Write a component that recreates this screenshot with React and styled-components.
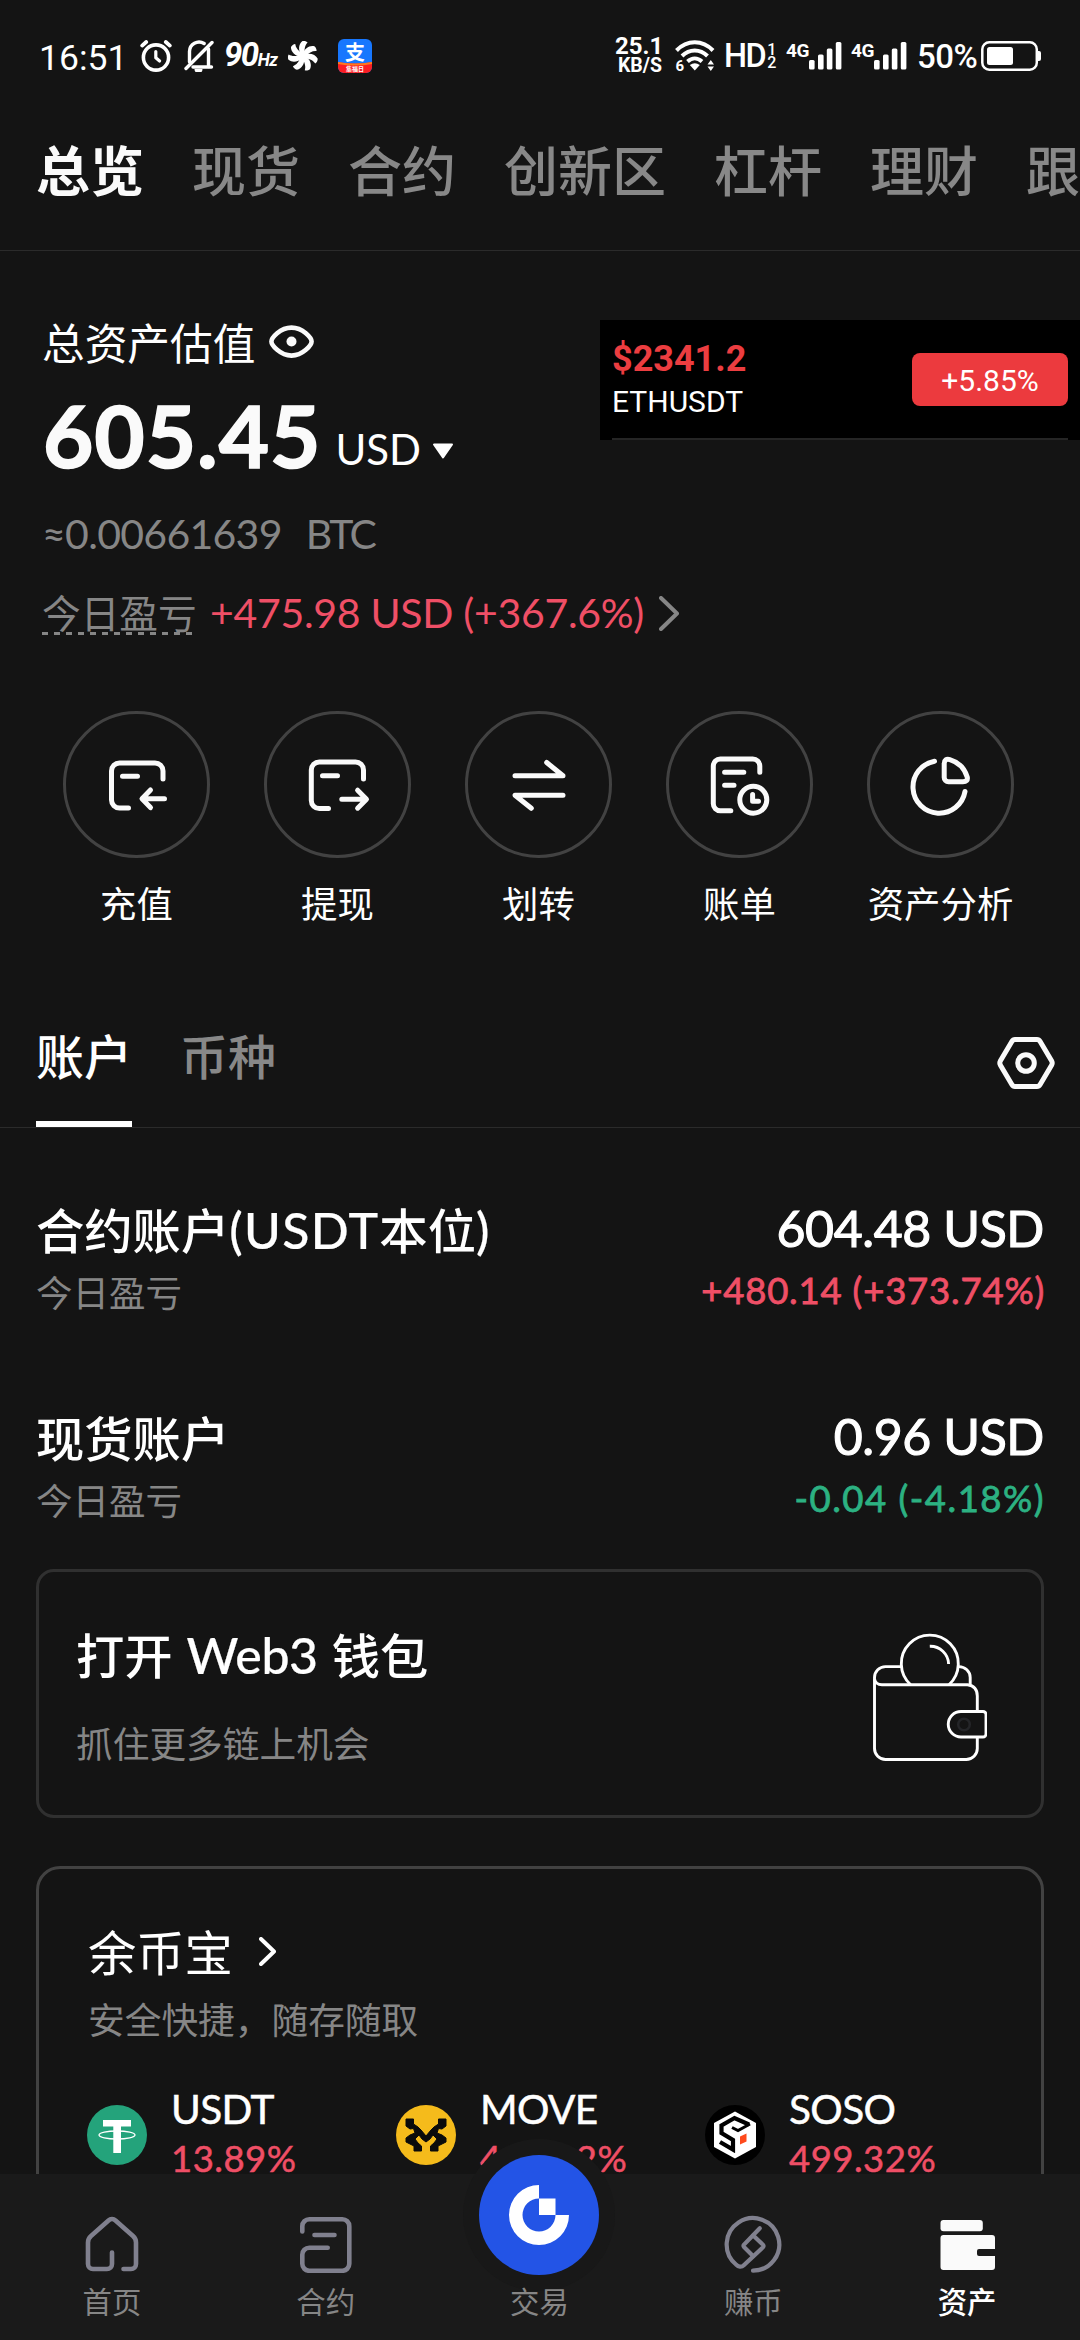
import React from 'react';
import styled, { createGlobalStyle } from 'styled-components';

const cjk = '"Noto Sans CJK SC", sans-serif';
const latin = 'Lato, "Noto Sans CJK SC", sans-serif';
const roboto = 'Roboto, "Noto Sans CJK SC", sans-serif';

const colors = {
  bg: '#141414',
  navBg: '#1a1a1a',
  grey: '#868686',
  red: '#ef4f66',
  green: '#2cb182',
  line: '#2b2b2b',
  ring: '#424242',
};

const GlobalStyle = createGlobalStyle`
  * {
    box-sizing: border-box;
  }
  body {
    margin: 0;
    background: ${colors.bg};
  }
  svg {
    display: block;
    flex: none;
  }
`;

const Page = styled.div`
  width: 1080px;
  height: 2340px;
  display: flex;
  flex-direction: column;
  position: relative;
  overflow: hidden;
  background: ${colors.bg};
  color: #fff;
  font-family: ${cjk};
  white-space: nowrap;
`;

const Content = styled.main`
  flex: 1;
  min-height: 0;
  overflow: hidden;
`;

/* status bar */

const StatusBar = styled.header`
  height: 112px;
  padding: 0 38px 0 39px;
  display: flex;
  justify-content: space-between;
  align-items: center;
  font-family: ${roboto};
`;

const StatusGroup = styled.div`
  display: flex;
  align-items: center;
`;

const StatusItem = styled.div`
  width: ${({ $width }) => $width}px;
  margin-left: ${({ $gap }) => $gap || 0}px;
  flex: none;
`;

const Time = styled(StatusItem)`
  font-size: 35.5px;
  line-height: 40px;
  padding-top: 3px;
`;

const Refresh = styled(StatusItem)`
  display: flex;
  align-items: baseline;
  padding-top: 2px;
  font-size: 33px;
  line-height: 40px;
  font-weight: 700;
  font-style: italic;
  letter-spacing: -1.5px;
  small {
    font-size: 17.5px;
    letter-spacing: -0.5px;
  }
`;

const Speed = styled(StatusItem)`
  padding-right: 1px;
  text-align: right;
  font-size: 24px;
  line-height: 20px;
  font-weight: 700;
  small {
    display: block;
    font-size: 19.5px;
  }
`;

const Hd = styled(StatusItem)`
  display: flex;
  align-items: center;
  font-size: 32.5px;
  line-height: 40px;
  font-weight: 500;
  letter-spacing: -1.5px;
`;

const HdIndex = styled.span`
  display: flex;
  flex-direction: column;
  margin-left: 2px;
  font-size: 16px;
  line-height: 13px;
`;

const Signal = styled(StatusItem)`
  display: flex;
  align-items: flex-start;
  font-size: 19px;
  line-height: 17px;
  font-weight: 700;
  letter-spacing: -0.5px;
`;

const Percent = styled(StatusItem)`
  padding-top: 1px;
  font-size: 33px;
  line-height: 40px;
  font-weight: 500;
  letter-spacing: -0.5px;
`;

/* top tabs */

const TopTabs = styled.nav`
  height: 139px;
  padding: 30px 0 0 36px;
  display: flex;
  gap: 48px;
  border-bottom: 1px solid ${colors.line};
  overflow: hidden;
`;

const TopTab = styled.span`
  flex: none;
  font-size: 54px;
  line-height: 54px;
  font-weight: ${({ $active }) => ($active ? 700 : 500)};
  color: ${({ $active }) => ($active ? '#fafafa' : '#888')};
`;

/* overview */

const Overview = styled.section`
  padding: 60px 0 0 42px;
`;

const TitleRow = styled.div`
  height: 60px;
  display: flex;
  align-items: center;
  gap: 14px;
  font-size: 42.7px;
  line-height: 60px;
  svg {
    margin-top: 2px;
  }
`;

const BalanceRow = styled.div`
  margin-top: 19px;
  height: 90px;
  display: flex;
  align-items: flex-end;
  font-family: ${latin};
`;

const Balance = styled.strong`
  padding-left: 1px;
  font-size: 87px;
  line-height: 90px;
  font-weight: 700;
  letter-spacing: 0.9px;
  color: #fafafa;
  -webkit-text-stroke: 1.6px #fafafa;
`;

const Currency = styled.span`
  margin: 0 11px 1px 14px;
  font-size: 42px;
  line-height: 60px;
`;

const Caret = styled.svg`
  margin-bottom: 21px;
`;

const BtcValue = styled.div`
  margin-top: 28px;
  display: flex;
  gap: 24px;
  font-family: ${latin};
  font-size: 41px;
  line-height: 51px;
  letter-spacing: -0.7px;
  color: ${colors.grey};
  span + span {
    letter-spacing: -2.5px;
  }
`;

const PnlRow = styled.div`
  margin-top: 29px;
  height: 50px;
  display: flex;
  align-items: center;
`;

const PnlLabel = styled.span`
  width: 152px;
  padding-bottom: 3px;
  font-size: 38.7px;
  line-height: 41px;
  color: ${colors.grey};
  background: repeating-linear-gradient(90deg, #868686 0 6px, transparent 6px 12px) left bottom / 100% 3px no-repeat;
`;

const PnlValue = styled.span`
  margin: 0 15px 0 16px;
  font-family: ${latin};
  font-size: 41px;
  line-height: 50px;
  letter-spacing: -0.3px;
  color: ${colors.red};
`;

/* floating price ticker */

const Ticker = styled.aside`
  position: absolute;
  top: 320px;
  left: 600px;
  width: 480px;
  height: 120px;
  padding: 0 12px;
  background: #000;
  font-family: ${roboto};
`;

const TickerInner = styled.div`
  height: 120px;
  display: flex;
  justify-content: space-between;
  align-items: flex-start;
  border-bottom: 2px solid #252525;
`;

const TickerPrice = styled.div`
  margin-top: 18px;
  font-size: 36px;
  line-height: 42px;
  font-weight: 700;
  color: #ec3d40;
`;

const TickerSymbol = styled.div`
  margin-top: 2px;
  font-size: 30px;
  line-height: 40px;
`;

const TickerChange = styled.div`
  width: 156px;
  height: 53px;
  margin-top: 33px;
  border-radius: 8px;
  background: #ec3a3e;
  font-size: 30px;
  line-height: 55px;
  text-align: center;
`;

/* quick actions */

const Actions = styled.section`
  margin-top: 73px;
  padding: 0 39px 0 36px;
  display: grid;
  grid-template-columns: repeat(5, 1fr);
`;

const Action = styled.div`
  display: flex;
  flex-direction: column;
  align-items: center;
`;

const ActionCircle = styled.div`
  width: 147px;
  height: 147px;
  border: 3px solid ${colors.ring};
  border-radius: 50%;
  display: flex;
  align-items: center;
  justify-content: center;
`;

const ActionLabel = styled.span`
  margin-top: 19px;
  font-size: 36.4px;
  line-height: 50px;
`;

/* account list */

const SectionTabs = styled.div`
  height: 201px;
  padding: 0 25px 0 36px;
  display: flex;
  align-items: flex-end;
  border-bottom: 1px solid ${colors.line};
  svg {
    margin: 0 0 38px auto;
  }
`;

const SectionTab = styled.span`
  height: 103px;
  margin-right: 48px;
  font-size: 48px;
  line-height: 60px;
  font-weight: 500;
  color: ${({ $active }) => ($active ? '#fff' : '#888')};
  border-bottom: 6px solid ${({ $active }) => ($active ? '#fff' : 'transparent')};
`;

const Accounts = styled.section`
  padding: 70px 36px 0;
  display: flex;
  flex-direction: column;
  gap: 89px;
`;

const Account = styled.div`
  height: 119px;
  display: flex;
  justify-content: space-between;
`;

const AccountName = styled.div`
  font-size: 48.3px;
  line-height: 60px;
  font-weight: 500;
  span {
    font-family: ${latin};
    font-size: 50px;
    line-height: 1;
    letter-spacing: 1.3px;
    -webkit-text-stroke: 0.2px #fff;
  }
`;

const AccountNote = styled.div`
  margin-top: 9px;
  font-size: 36.5px;
  line-height: 50px;
  color: ${colors.grey};
`;

const Amount = styled.div`
  font-family: ${latin};
  font-size: 50px;
  line-height: 60px;
  text-align: right;
  letter-spacing: -0.4px;
  -webkit-text-stroke: 1.1px #fff;
`;

const Change = styled.div`
  margin: 7px -1px 0 0;
  font-family: ${latin};
  font-size: 36.5px;
  line-height: 50px;
  text-align: right;
  letter-spacing: ${({ $up }) => ($up ? 0.8 : 1.5)}px;
  color: ${({ $up }) => ($up ? colors.red : colors.green)};
  -webkit-text-stroke: 0.8px currentColor;
`;

/* cards */

const WalletCard = styled.section`
  height: 249px;
  margin: 44px 36px 0;
  padding: 51px 54px 0 37px;
  display: flex;
  justify-content: space-between;
  border: 3px solid #303030;
  border-radius: 18px;
  svg {
    margin-top: 10px;
  }
`;

const CardTitle = styled.div`
  height: 60px;
  display: flex;
  align-items: center;
  font-size: 48.3px;
  line-height: 60px;
  font-weight: ${({ $weight }) => $weight || 400};
  svg {
    margin: 2px 0 0 26px;
  }
`;

const CardTitleLatin = styled.span`
  padding-top: 3px;
  margin: 0 14px 0 14px;
  font-family: ${latin};
  font-size: 50px;
  letter-spacing: -0.4px;
  -webkit-text-stroke: 0.2px #fff;
`;

const CardNote = styled.div`
  margin-top: ${({ $gap }) => $gap}px;
  font-size: 36.7px;
  line-height: 50px;
  color: ${colors.grey};
`;

const EarnCard = styled.section`
  height: 420px;
  margin: 48px 36px 0;
  padding: 51px 27px 0 49px;
  border: 3px solid ${colors.ring};
  border-radius: 24px;
`;

const Coins = styled.div`
  margin: 40px 0 0 -1px;
  display: grid;
  grid-template-columns: repeat(3, 309px);
`;

const Coin = styled.div`
  display: flex;
  gap: 24px;
  svg {
    margin-top: 22px;
  }
`;

const CoinName = styled.div`
  font-family: ${latin};
  font-size: 40.5px;
  line-height: 50px;
  padding-top: 1px;
  letter-spacing: -0.6px;
  -webkit-text-stroke: 0.5px #fff;
`;

const CoinRate = styled.div`
  margin-top: -1px;
  font-family: ${latin};
  font-size: 36.5px;
  line-height: 50px;
  letter-spacing: 0.5px;
  color: ${colors.red};
  -webkit-text-stroke: 0.5px currentColor;
`;

/* bottom navigation */

const BottomNav = styled.nav`
  flex: none;
  height: 166px;
  padding: 41px 6px 0 5px;
  display: grid;
  grid-template-columns: repeat(5, 1fr);
  background: ${colors.navBg};
  position: relative;
`;

const NavItem = styled.div`
  display: flex;
  flex-direction: column;
  align-items: center;
  color: ${({ $active }) => ($active ? '#fff' : colors.grey)};
`;

const NavLabel = styled.span`
  margin-top: 7px;
  font-size: 29.4px;
  line-height: 40px;
  font-weight: ${({ $active }) => ($active ? 500 : 400)};
`;

const TradeButton = styled.div`
  width: 120px;
  height: 120px;
  margin: -60px 0 -2px;
  border-radius: 50%;
  background: #2354e6;
  box-shadow: 0 0 0 16px #181818;
`;

/* icons */

const line = (color, width) => ({
  fill: 'none',
  stroke: color,
  strokeWidth: width,
  strokeLinecap: 'round',
  strokeLinejoin: 'round',
});

const AlarmIcon = () => (
  <svg width="32" height="32" viewBox="0 0 32 32" {...line('#fff', 3.6)}>
    <circle cx="16" cy="17.5" r="12.6" />
    <path d="M15.8 11.5v6.2l3.8 3.3" strokeWidth="3.2" />
    <path d="M2.2 5.6l4-3.6M29.8 5.6l-4-3.6" strokeWidth="3.8" />
  </svg>
);

const MuteIcon = () => (
  <svg width="30" height="32" viewBox="0 0 30 32" {...line('#fff', 3.4)}>
    <path d="M5.5 22V11.5a9.5 9.5 0 0 1 14.6-8M24.5 9v17.5" />
    <path d="M9 27h18.5" />
    <path d="M2 28.5L28 2.5" />
    <path d="M10.5 29h8a4 4 0 0 1-8 0z" fill="#fff" stroke="none" />
  </svg>
);

const FanIcon = () => (
  <svg width="30" height="32" viewBox="-15 -16 30 32" fill="#fff">
    <circle r="3.6" />
    {[0, 51.4, 102.8, 154.3, 205.7, 257.1, 308.5].map((a) => (
      <path key={a} transform={`rotate(${a})`} d="M-1.8 -1C-5 -6 -4.5 -12 -0.5 -15C1.5 -15.4 3.8 -14.8 4.6 -13.6C2 -11 1 -7 1.8 -1Z" />
    ))}
  </svg>
);

const PayIcon = () => (
  <svg width="34" height="34" viewBox="0 0 34 34">
    <defs>
      <clipPath id="pay">
        <rect width="34" height="34" rx="6" />
      </clipPath>
    </defs>
    <g clipPath="url(#pay)">
      <rect width="34" height="34" fill="#1777fe" />
      <path d="M0 23Q17 26 34 23V34H0Z" fill="#fb1d22" />
      <path d="M0 23Q17 26 34 23V25Q17 28 0 25Z" fill="#ff7a1c" />
    </g>
    <text x="17" y="20.5" fontSize="20" fontWeight="700" textAnchor="middle" fill="#fff" fontFamily="Noto Sans CJK SC, sans-serif">支</text>
    <text x="17" y="32" fontSize="6" fontWeight="700" textAnchor="middle" fill="#fff" fontFamily="Noto Sans CJK SC, sans-serif">集福日</text>
  </svg>
);

const WifiIcon = () => (
  <svg width="40" height="32" viewBox="0 0 40 32" {...line('#fff', 4)} strokeLinecap="butt">
    <path d="M1.5 10.5C12 -.5 27.5 -.5 38 10.5" />
    <path d="M7 16C14.5 8.5 25 8.5 32.5 16" />
    <path d="M12.5 21.5C17 17.5 22.5 17.5 27 21.5" />
    <path d="M14.8 25Q19.8 21.5 24.8 25L19.8 30.5Z" fill="#fff" stroke="none" />
    <path d="M32.5 24.5L35.8 20L39 24.5ZM32.5 26.5L35.8 31L39 26.5Z" fill="#fff" stroke="none" />
    <text x="0.5" y="31" fontSize="15" fontWeight="700" fill="#fff" stroke="none" fontFamily="Roboto, sans-serif">6</text>
  </svg>
);

const SignalIcon = () => (
  <svg width="33" height="28" viewBox="0 0 33 28" fill="#fff">
    <rect x="0" y="18" width="5.6" height="9.5" rx="1.5" />
    <rect x="9" y="12.5" width="5.6" height="15" rx="1.5" />
    <rect x="17.8" y="6.5" width="5.6" height="21" rx="1.5" />
    <rect x="26.8" y="0" width="5.6" height="27.5" rx="1.5" />
  </svg>
);

const BatteryIcon = () => (
  <svg width="61" height="30" viewBox="0 0 61 30">
    <rect x="1.3" y="1.3" width="54.5" height="27.4" rx="7" fill="none" stroke="#fff" strokeWidth="2.5" />
    <rect x="6" y="6" width="26" height="18" rx="2.5" fill="#fff" />
    <path d="M56 10h2a2 2 0 0 1 2 2v6a2 2 0 0 1-2 2h-2z" fill="#fff" />
  </svg>
);

const EyeIcon = () => (
  <svg width="45" height="34" viewBox="0 0 45 34" {...line('#fafafa', 4.6)}>
    <path d="M2.4 16.5C2.4 13 11 2.6 22.5 2.6S42.6 13 42.6 16.5S34 30.6 22.5 30.6S2.4 20 2.4 16.5Z" />
    <circle cx="22.5" cy="16.5" r="5" fill="#fafafa" stroke="none" />
  </svg>
);

const DepositIcon = () => (
  <svg width="72" height="72" viewBox="0 0 72 72" {...line('#fafafa', 5)}>
    <path d="M27.5 59H18.5a8 8 0 0 1-8-8V22a8 8 0 0 1 8-8H54a8 8 0 0 1 8 8V30" />
    <path d="M21.5 27.2H36.5M63.5 49.8H41.5M49.5 41L41 49.8l8.5 8.8" />
  </svg>
);

const WithdrawIcon = () => (
  <svg width="72" height="72" viewBox="0 0 72 72" {...line('#fafafa', 5)}>
    <path d="M26.5 59.5H17.3a8 8 0 0 1-8-8V21a8 8 0 0 1 8-8H53.5a8 8 0 0 1 8 8V30" />
    <path d="M20.5 26.8H35.5M39.8 50.2H64M55.6 41.2L64.5 50.2l-8.9 9" />
  </svg>
);

const TransferIcon = () => (
  <svg width="72" height="72" viewBox="0 0 72 72" {...line('#fafafa', 5)}>
    <path d="M12 26.8H60L43.7 13.5M60 46.2H12L28.3 59.3" />
  </svg>
);

const BillIcon = () => (
  <svg width="72" height="72" viewBox="0 0 72 72" {...line('#fafafa', 5)}>
    <path d="M26.8 61.8H16.3a7 7 0 0 1-7-7V17a7 7 0 0 1 7-7H48.8a7 7 0 0 1 7 7V23.2" />
    <path d="M20.6 23.2H39.8M20.6 36.2H30" />
    <circle cx="49.3" cy="50.7" r="13.5" />
    <path d="M48.6 45.5V52.3H54.5" />
  </svg>
);

const PieIcon = () => (
  <svg width="72" height="72" viewBox="0 0 72 72" {...line('#fafafa', 5)}>
    <path d="M29.5 12.2A26.2 26.2 0 1 0 60 42.5" />
    <path d="M39.2 14.8C39.2 11 41.5 9.6 44.8 10.6A26 26 0 0 1 62.2 28C63 31 61.2 32.8 58 32.8H43.5a4.3 4.3 0 0 1-4.3-4.3Z" />
  </svg>
);

const HexIcon = () => (
  <svg width="58" height="52" viewBox="0 0 58 52" {...line('#fafafa', 5)}>
    <path d="M18 2.6H40Q42 2.6 43 4.3L54.7 24Q55.7 26 54.7 28L43 47.7Q42 49.4 40 49.4H18Q16 49.4 15 47.7L3.3 28Q2.3 26 3.3 24L15 4.3Q16 2.6 18 2.6Z" />
    <circle cx="29" cy="26" r="8.3" />
  </svg>
);

const Chevron = ({ width, height, color, stroke }) => (
  <svg width={width} height={height} {...line(color, stroke)}>
    <path d={`M${stroke / 2} ${stroke / 2}L${width - stroke / 2} ${height / 2}L${stroke / 2} ${height - stroke / 2}`} />
  </svg>
);

const WalletIcon = () => (
  <svg width="114" height="128" viewBox="0 0 114 128" {...line('#fff', 2.9)} strokeLinecap="butt">
    <path d="M37.6 51.7A28.5 28.5 0 1 1 76 51.7" />
    <path d="M56.8 13.3A18.3 18.3 0 0 1 75.6 31" />
    <path d="M28 33.6H12.5a11 11 0 0 0-11 11V115.5a11 11 0 0 0 11 11H93.3a11 11 0 0 0 11-11V104" />
    <path d="M86 33.6C92 33.6 97.2 38.5 97.2 44.5V51.7" />
    <path d="M1.5 46Q2.5 51.7 9 51.7H94.5Q104.3 53 104.3 63V78.5" />
    <path d="M88 78.5H110a3 3 0 0 1 3 3V101a3 3 0 0 1-3 3H88a12.7 12.7 0 0 1 0-25.5Z" />
    <circle cx="91" cy="91.5" r="5.8" stroke="#242528" strokeWidth="2.5" />
  </svg>
);

const UsdtIcon = () => (
  <svg width="60" height="60" viewBox="0 0 60 60">
    <circle cx="30" cy="30" r="30" fill="#24a37b" />
    <path d="M16 15H44V21.5H34V48H26.3V21.5H16Z" fill="#fff" />
    <ellipse cx="30" cy="30" rx="18" ry="4" fill="none" stroke="#fff" strokeWidth="1.3" />
  </svg>
);

const MoveIcon = () => (
  <svg width="60" height="60" viewBox="0 0 60 60">
    <circle cx="30" cy="30" r="30" fill="#f5bb1b" />
    <path
      d="M10 14H17.5V19L22 22L25 25L30 31L35 25L38 22L42.5 19V14H50V21L46 24L42.5 23.5L41 28L46 30L50 33V37L46 39L42 41V46H34.5V41L38 38L41 34L37 30L34 34L30 37L26 34L23 30L19 34L22 38L25.5 41V46H18V41L14 39L10 37V33L14 30L19 28L17.5 23.5L14 24L10 21Z"
      fill="#0b0b0b"
      stroke="#0b0b0b"
      strokeWidth="1"
      strokeLinejoin="round"
    />
  </svg>
);

const SosoIcon = () => (
  <svg width="60" height="60" viewBox="0 0 60 60">
    <circle cx="30" cy="30" r="30" fill="#000" />
    <path d="M30 6.5L51 18V42L30 53.5L9 42V18Z" fill="#fff" />
    <path d="M44 19.5L29.5 13L16.5 20.5V28L28 35V44.5L15 37" fill="none" stroke="#000" strokeWidth="4.2" />
    <path d="M45 19L33 25.5L27 22.5" fill="none" stroke="#000" strokeWidth="3" />
    <path d="M35 31.5L41.5 28.5V36.5L35 39.5Z" fill="#ff4a1c" />
  </svg>
);

const navStroke = line('#80808e', 4.6);

const HomeIcon = () => (
  <svg width="58" height="58" viewBox="0 0 58 58" {...navStroke}>
    <path d="M29 37.5V49a5 5 0 0 1-5 5H10a5 5 0 0 1-5-5V27.5c0-3 1-4.8 3-6.5L25.5 5.5c2-1.8 5-1.8 7 0L50 21c2 1.7 3 3.5 3 6.5V49a5 5 0 0 1-5 5H40.5" />
  </svg>
);

const ContractIcon = () => (
  <svg width="58" height="58" viewBox="0 0 58 58" {...navStroke}>
    <path d="M5.3 16.5V11.2a7 7 0 0 1 7-7H45.3a7 7 0 0 1 7 7V48.8a7 7 0 0 1-7 7H12.3a7 7 0 0 1-7-7V39.7a7 7 0 0 1 7-7H30.7" />
    <path d="M17.5 20H37.5" />
  </svg>
);

const EarnIcon = () => (
  <svg width="58" height="58" viewBox="0 0 58 58" {...navStroke} strokeWidth="4.2">
    <path d="M29 55.7A26.3 26.3 0 1 0 12 49.5C14.5 52 17.5 52.5 19.8 50.3L39 32.2Q40 31 39 29.8L29.2 20.5" />
    <path d="M35.8 13.2L20 29.6Q19 30.8 20 32L29 41" />
  </svg>
);

const AssetsIcon = () => (
  <svg width="58" height="58" viewBox="0 0 58 58" fill="#fafafa">
    <rect x="2.5" y="5" width="42.3" height="11.2" rx="3" />
    <path d="M5.5 20H54a3 3 0 0 1 3 3V34H41a2 2 0 0 0-2 2V39a2 2 0 0 0 2 2H57V52a3 3 0 0 1-3 3H5.5a3 3 0 0 1-3-3V23a3 3 0 0 1 3-3Z" />
  </svg>
);

const TradeLogo = () => (
  <svg width="120" height="120" viewBox="0 0 120 120" fill="#fff">
    <path d="M60 30A30 30 0 1 0 90 60H76.5A16.5 16.5 0 1 1 60 43.5Z" />
    <rect x="60" y="43.5" width="16.5" height="16.5" />
  </svg>
);

const topTabs = ['总览', '现货', '合约', '创新区', '杠杆', '理财', '跟单'];

const actions = [
  { label: '充值', Icon: DepositIcon },
  { label: '提现', Icon: WithdrawIcon },
  { label: '划转', Icon: TransferIcon },
  { label: '账单', Icon: BillIcon },
  { label: '资产分析', Icon: PieIcon },
];

const accounts = [
  {
    id: 'futures',
    name: <>合约账户<span>(USDT</span>本位<span>)</span></>,
    amount: '604.48 USD',
    change: '+480.14 (+373.74%)',
    up: true,
  },
  {
    id: 'spot',
    name: '现货账户',
    amount: '0.96 USD',
    change: '-0.04 (-4.18%)',
    up: false,
  },
];

const coins = [
  { name: 'USDT', rate: '13.89%', Icon: UsdtIcon },
  { name: 'MOVE', rate: '499.32%', Icon: MoveIcon },
  { name: 'SOSO', rate: '499.32%', Icon: SosoIcon },
];

function Status() {
  return (
    <StatusBar>
      <StatusGroup>
        <Time $width={87}>16:51</Time>
        <StatusItem $width={32} $gap={14}><AlarmIcon /></StatusItem>
        <StatusItem $width={30} $gap={12}><MuteIcon /></StatusItem>
        <Refresh $width={54} $gap={10}>90<small>Hz</small></Refresh>
        <StatusItem $width={30} $gap={10}><FanIcon /></StatusItem>
        <StatusItem $width={34} $gap={20}><PayIcon /></StatusItem>
      </StatusGroup>
      <StatusGroup>
        <Speed $width={48}>
          25.1
          <small>KB/S</small>
        </Speed>
        <StatusItem $width={40} $gap={12}><WifiIcon /></StatusItem>
        <Hd $width={50} $gap={9}>
          HD
          <HdIndex>
            <span>1</span>
            <span>2</span>
          </HdIndex>
        </Hd>
        <Signal $width={54} $gap={12}>4G<SignalIcon /></Signal>
        <Signal $width={54} $gap={11}>4G<SignalIcon /></Signal>
        <Percent $width={62} $gap={12}>50%</Percent>
        <StatusItem $width={61} $gap={2}><BatteryIcon /></StatusItem>
      </StatusGroup>
    </StatusBar>
  );
}

function App() {
  return (
    <Page>
      <GlobalStyle />
      <Content>
        <Status />
        <TopTabs>
          {topTabs.map((tab, index) => (
            <TopTab key={tab} $active={index === 0}>{tab}</TopTab>
          ))}
        </TopTabs>
        <Overview>
          <TitleRow>
            总资产估值
            <EyeIcon />
          </TitleRow>
          <BalanceRow>
            <Balance>605.45</Balance>
            <Currency>USD</Currency>
            <Caret width="22" height="16" viewBox="0 0 22 16">
              <path d="M2 1.5H20L11 14.5Z" fill="#fff" stroke="#fff" strokeWidth="2" strokeLinejoin="round" />
            </Caret>
          </BalanceRow>
          <BtcValue>
            <span>≈0.00661639</span>
            <span>BTC</span>
          </BtcValue>
          <PnlRow>
            <PnlLabel>今日盈亏</PnlLabel>
            <PnlValue>+475.98 USD (+367.6%)</PnlValue>
            <Chevron width={20} height={35} color="#868686" stroke={4} />
          </PnlRow>
        </Overview>
        <Actions>
          {actions.map(({ label, Icon }) => (
            <Action key={label}>
              <ActionCircle><Icon /></ActionCircle>
              <ActionLabel>{label}</ActionLabel>
            </Action>
          ))}
        </Actions>
        <SectionTabs>
          <SectionTab $active>账户</SectionTab>
          <SectionTab>币种</SectionTab>
          <HexIcon />
        </SectionTabs>
        <Accounts>
          {accounts.map((item) => (
            <Account key={item.id}>
              <div>
                <AccountName>{item.name}</AccountName>
                <AccountNote>今日盈亏</AccountNote>
              </div>
              <div>
                <Amount>{item.amount}</Amount>
                <Change $up={item.up}>{item.change}</Change>
              </div>
            </Account>
          ))}
        </Accounts>
        <WalletCard>
          <div>
            <CardTitle $weight={500}>
              打开
              <CardTitleLatin>Web3</CardTitleLatin>
              钱包
            </CardTitle>
            <CardNote $gap={34}>抓住更多链上机会</CardNote>
          </div>
          <WalletIcon />
        </WalletCard>
        <EarnCard>
          <CardTitle>
            余币宝
            <Chevron width={17} height={29} color="#fff" stroke={4} />
          </CardTitle>
          <CardNote $gap={13}>安全快捷，随存随取</CardNote>
          <Coins>
            {coins.map(({ name, rate, Icon }) => (
              <Coin key={name}>
                <Icon />
                <div>
                  <CoinName>{name}</CoinName>
                  <CoinRate>{rate}</CoinRate>
                </div>
              </Coin>
            ))}
          </Coins>
        </EarnCard>
      </Content>
      <BottomNav>
        <NavItem>
          <HomeIcon />
          <NavLabel>首页</NavLabel>
        </NavItem>
        <NavItem>
          <ContractIcon />
          <NavLabel>合约</NavLabel>
        </NavItem>
        <NavItem>
          <TradeButton><TradeLogo /></TradeButton>
          <NavLabel>交易</NavLabel>
        </NavItem>
        <NavItem>
          <EarnIcon />
          <NavLabel>赚币</NavLabel>
        </NavItem>
        <NavItem $active>
          <AssetsIcon />
          <NavLabel $active>资产</NavLabel>
        </NavItem>
      </BottomNav>
      <Ticker>
        <TickerInner>
          <div>
            <TickerPrice>$2341.2</TickerPrice>
            <TickerSymbol>ETHUSDT</TickerSymbol>
          </div>
          <TickerChange>+5.85%</TickerChange>
        </TickerInner>
      </Ticker>
    </Page>
  );
}

export default App;
